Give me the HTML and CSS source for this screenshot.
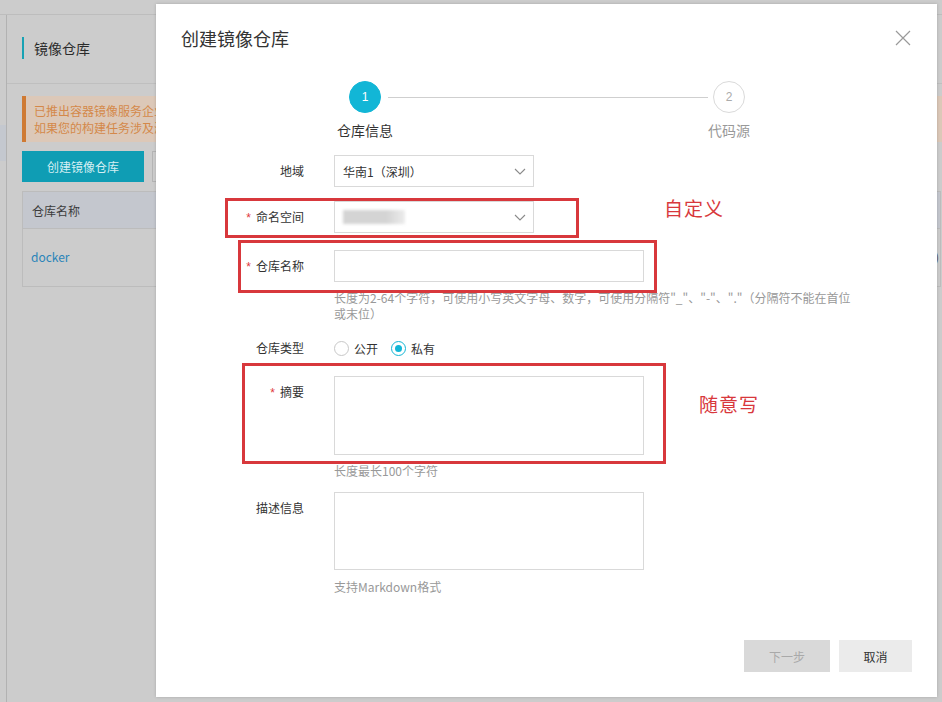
FILE: index.html
```html
<!DOCTYPE html>
<html lang="zh-CN">
<head>
<meta charset="utf-8">
<title>创建镜像仓库</title>
<link rel="stylesheet" href="styles.css">
</head>
<body>
<div class="page">
  <div class="topstrip"></div>
  <div class="main">
    <div class="rail"><div class="rail-hl"></div></div>
    <div class="content">
      <div class="page-head"><span class="page-title">镜像仓库</span></div>
      <div class="page-body">
        <div class="alert">
          <div>已推出容器镜像服务企业版，欢迎使用</div>
          <div>如果您的构建任务涉及海外源码，请使用</div>
        </div>
        <div class="toolbar">
          <button class="btn-primary">创建镜像仓库</button>
          <button class="btn-ghost">刷新</button>
        </div>
        <div class="table">
          <div class="thead">仓库名称</div>
          <div class="trow"><a class="link">docker</a><span class="trow-end">)</span></div>
        </div>
      </div>
    </div>
  </div>
</div>

<div class="modal">
  <div class="modal-head">
    <div class="modal-title">创建镜像仓库</div>
    <svg class="close" width="16" height="16" viewBox="0 0 16 16"><path d="M1 1L15 15M15 1L1 15" stroke="#9a9a9a" stroke-width="1.2" fill="none"/></svg>
  </div>

  <div class="steps">
    <div class="step step-1">
      <div class="step-circle active">1</div>
      <div class="step-label">仓库信息</div>
    </div>
    <div class="step-line"></div>
    <div class="step step-2">
      <div class="step-circle">2</div>
      <div class="step-label muted">代码源</div>
    </div>
  </div>

  <div class="form">
    <div class="row row-a">
      <div class="label">地域</div>
      <div class="control">
        <div class="select">
          <span>华南1（深圳）</span>
          <svg width="12" height="7" viewBox="0 0 12 7"><path d="M1 1L6 6L11 1" stroke="#8a8a8a" stroke-width="1.1" fill="none"/></svg>
        </div>
      </div>
    </div>
    <div class="row row-b">
      <div class="label"><span class="req">*</span>命名空间</div>
      <div class="control">
        <div class="select">
          <span class="blurred"></span>
          <svg width="12" height="7" viewBox="0 0 12 7"><path d="M1 1L6 6L11 1" stroke="#8a8a8a" stroke-width="1.1" fill="none"/></svg>
        </div>
      </div>
    </div>
    <div class="row row-c">
      <div class="label"><span class="req">*</span>仓库名称</div>
      <div class="control">
        <div class="input"></div>
        <div class="help">长度为2-64个字符，可使用小写英文字母、数字，可使用分隔符"_"、"-"、"."（分隔符不能在首位<br>或末位）</div>
      </div>
    </div>
    <div class="row row-d">
      <div class="label short">仓库类型</div>
      <div class="control radios">
        <span class="radio"><span class="dot"></span>公开</span>
        <span class="radio"><span class="dot checked"></span>私有</span>
      </div>
    </div>
    <div class="row row-e">
      <div class="label"><span class="req">*</span>摘要</div>
      <div class="control">
        <div class="textarea ta-1"></div>
        <div class="help">长度最长100个字符</div>
      </div>
    </div>
    <div class="row row-f">
      <div class="label">描述信息</div>
      <div class="control">
        <div class="textarea ta-2"></div>
        <div class="help help-last">支持Markdown格式</div>
      </div>
    </div>
  </div>

  <div class="footer">
    <button class="btn-next">下一步</button>
    <button class="btn-cancel">取消</button>
  </div>
</div>

<div class="mark mark-1"></div>
<div class="mark mark-2"></div>
<div class="mark mark-3"></div>
<div class="note note-1">自定义</div>
<div class="note note-2">随意写</div>
</body>
</html>
```

FILE: styles.css
```css
* { box-sizing: border-box; }
html, body { margin: 0; padding: 0; }
body {
  width: 942px;
  height: 702px;
  overflow: hidden;
  position: relative;
  font-family: "Noto Sans CJK SC", "Noto Sans", "Liberation Sans", sans-serif;
  font-size: 12px;
  color: #333;
  background: #cccccc;
}
button { font-family: inherit; font-size: 12px; border: 0; margin: 0; padding: 0; }

/* ---------- background page (masked) ---------- */
.page {
  width: 942px;
  height: 702px;
  display: flex;
  flex-direction: column;
  background: #cccccc;
}
.topstrip {
  height: 15px;
  border-bottom: 1px solid #bdbdbd;
  flex: none;
}
.main { flex: 1; display: flex; }
.rail {
  width: 7px;
  border-right: 1px solid #b2b2b2;
  flex: none;
  padding-top: 110px;
}
.rail-hl { height: 36px; background: #c4c8cf; }
.content { flex: 1; display: flex; flex-direction: column; }
.page-head {
  height: 69px;
  border-bottom: 1px solid #bfbfbf;
  padding: 22px 0 0 15px;
}
.page-title {
  display: inline-block;
  border-left: 2px solid #17a2b4;
  padding-left: 10px;
  line-height: 22px;
  font-size: 14px;
  color: #2b2b2b;
}
.page-body { padding: 12px 0 0 15px; }
.alert {
  height: 46px;
  border-left: 4px solid #cf7a33;
  background: #dcc8b8;
  color: #d4884a;
  padding: 6px 0 0 8px;
  line-height: 17px;
  white-space: nowrap;
  overflow: hidden;
}
.toolbar { margin-top: 9px; display: flex; gap: 8px; }
.btn-primary {
  width: 122px;
  height: 31px;
  background: #0f9db4;
  color: #d4eff3;
}
.btn-ghost {
  width: 80px;
  height: 31px;
  background: #cdcdcd;
  border: 1px solid #b4b4b4;
  color: #444;
}
.table {
  margin-top: 9px;
  border: 1px solid #bcbcbc;
  margin-right: 1px;
}
.thead {
  height: 37px;
  line-height: 37px;
  background: #c4c7ce;
  padding-left: 9px;
  color: #3c3c3c;
  border-bottom: 1px solid #bcbcbc;
}
.trow {
  height: 57px;
  line-height: 56px;
  padding-left: 8px;
  display: flex;
  justify-content: space-between;
}
.link { color: #2a84b9; }
.trow-end { color: #555; padding-right: 1px; }

/* ---------- modal ---------- */
.modal {
  position: absolute;
  left: 156px;
  top: 4px;
  width: 781px;
  height: 693px;
  background: #fff;
  box-shadow: 0 0 3px rgba(0, 0, 0, 0.18);
  padding: 22px 25px 25px 25px;
  display: flex;
  flex-direction: column;
}
.modal-head {
  display: flex;
  justify-content: space-between;
  align-items: center;
  height: 24px;
}
.modal-title {
  font-size: 18px;
  line-height: 24px;
  color: #333;
}
.close { display: block; margin-right: 1px; }

.steps {
  margin: 31px 0 0 156px;
  width: 414px;
  display: flex;
  align-items: flex-start;
}
.step { display: flex; flex-direction: column; align-items: center; flex: none; }
.step-1 { width: 56px; }
.step-2 { width: 44px; }
.step-circle {
  width: 32px;
  height: 32px;
  border-radius: 50%;
  border: 1px solid #dadada;
  color: #ababab;
  font-size: 12px;
  line-height: 30px;
  text-align: center;
  font-family: "Liberation Sans", sans-serif;
}
.step-circle.active {
  background: #12b6d6;
  border-color: #12b6d6;
  color: #fff;
}
.step-label {
  margin-top: 7px;
  font-size: 14px;
  line-height: 20px;
  color: #333;
  white-space: nowrap;
}
.step-label.muted { color: #999; }
.step-line {
  flex: 1;
  height: 1px;
  background: #cfcfcf;
  margin: 16px -1px 0 -5px;
}

.form { margin-top: 15px; display: flex; flex-direction: column; }
.row { display: flex; align-items: flex-start; gap: 30px; }
.row-a { margin-bottom: 14px; }
.row-b { margin-bottom: 16px; }
.row-c { margin-bottom: 14px; }
.row-d { margin-bottom: 16px; }
.row-e { margin-bottom: 13px; }
.label {
  width: 123px;
  flex: none;
  text-align: right;
  line-height: 32px;
  color: #333;
  white-space: nowrap;
}
.label.short { line-height: 24px; }
.req { color: #e0383c; margin-right: 5px; font-family: "Liberation Sans", sans-serif; }
.control { display: flex; flex-direction: column; }
.select {
  width: 200px;
  height: 32px;
  border: 1px solid #d9d9d9;
  display: flex;
  align-items: center;
  justify-content: space-between;
  padding: 0 7px 0 8px;
  color: #333;
}
.blurred {
  display: block;
  width: 62px;
  height: 14px;
  background: linear-gradient(90deg, #d4d4d4 0%, #d4d4d4 70%, #ececec 100%);
  filter: blur(1.5px);
}
.input {
  width: 310px;
  height: 32px;
  border: 1px solid #d9d9d9;
}
.help {
  margin-top: 8px;
  line-height: 16px;
  color: #999;
  white-space: nowrap;
}
.help-last { margin-top: 9px; }
.radios {
  flex-direction: row;
  align-items: center;
  height: 24px;
  gap: 13px;
}
.radio { display: flex; align-items: center; gap: 5px; color: #333; }
.dot {
  width: 15px;
  height: 15px;
  border-radius: 50%;
  border: 1px solid #c8c8c8;
  background: #fff;
  display: flex;
  align-items: center;
  justify-content: center;
}
.dot.checked { border-color: #12b6d6; }
.dot.checked::after {
  content: "";
  width: 7px;
  height: 7px;
  border-radius: 50%;
  background: #12b6d6;
}
.textarea {
  width: 310px;
  border: 1px solid #d9d9d9;
}
.ta-1 { height: 79px; }
.ta-2 { height: 78px; }

.footer {
  margin-top: auto;
  display: flex;
  justify-content: flex-end;
  gap: 9px;
}
.btn-next {
  width: 86px;
  height: 32px;
  background: #d9d9d9;
  color: #a9a9a9;
}
.btn-cancel {
  width: 73px;
  height: 32px;
  background: #ebebeb;
  color: #333;
}

/* ---------- annotations over the screenshot ---------- */
.mark {
  position: absolute;
  border: 3px solid #d8383c;
}
.mark-1 { left: 225px; top: 198px; width: 354px; height: 40px; }
.mark-2 { left: 238px; top: 240px; width: 419px; height: 53px; }
.mark-3 { left: 242px; top: 363px; width: 424px; height: 101px; }
.note {
  position: absolute;
  color: #d8383c;
  font-size: 19px;
  line-height: 24px;
  letter-spacing: 1px;
}
.note-1 { left: 664px; top: 196px; }
.note-2 { left: 699px; top: 392px; }
```
